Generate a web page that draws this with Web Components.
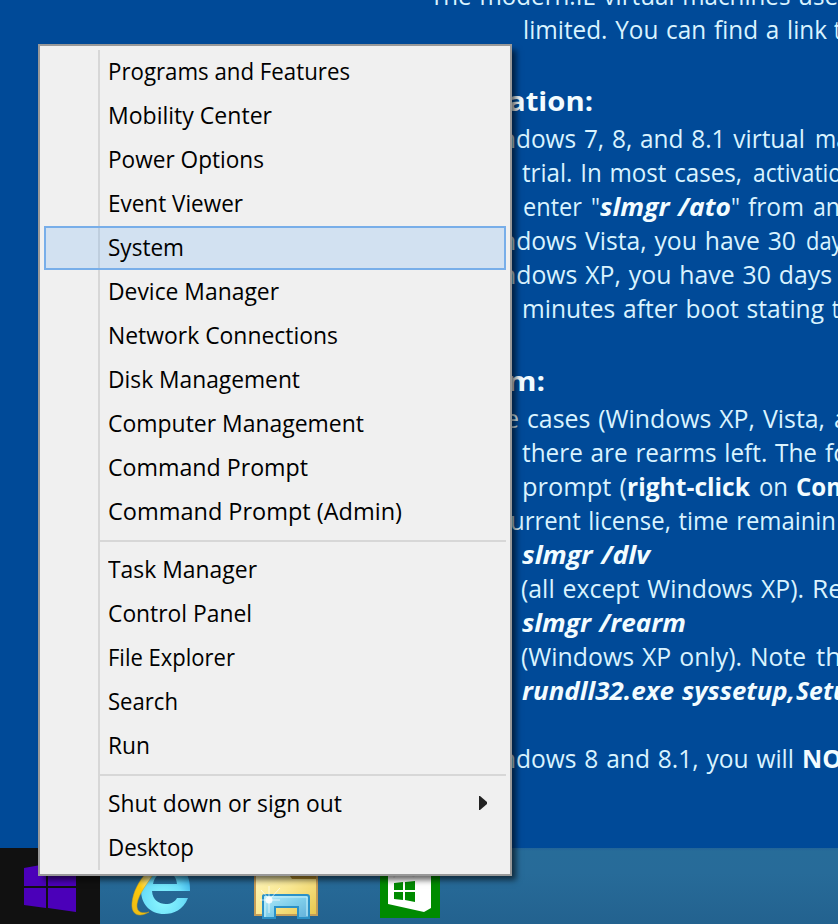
<!DOCTYPE html>
<html lang="en">
<head>
<meta charset="utf-8">
<title>Desktop</title>
<style>
html,body{margin:0;width:838px;height:924px;overflow:hidden}
body{font-family:"Open Sans","Noto Sans",sans-serif}
</style>
</head>
<body>
<desk-top></desk-top>
<script>
// Text run drawn at a given width: the glyphs are condensed or widened to fill it.
class FitText extends HTMLElement{
  connectedCallback(){
    const r=this.attachShadow({mode:"open"});
    r.innerHTML=`<style>:host{display:inline-block;white-space:pre;flex:none}
      span{display:inline-block;transform-origin:0 50%}</style><span><slot></slot></span>`;
    const s=r.querySelector("span"),w=+this.getAttribute("width");
    const n=s.getBoundingClientRect().width;
    s.style.transform=`scaleX(${w/n})`;
    this.style.width=w+"px";
  }
}
customElements.define("fit-text",FitText);

class MenuItem extends HTMLElement{
  connectedCallback(){
    const r=this.attachShadow({mode:"open"});
    r.innerHTML=`<style>
      :host{display:flex;align-items:center;height:44px;box-sizing:border-box;padding:0 18px 2px 64px;font-size:24.3px;line-height:34px;color:#000}
      :host([selected]){background:rgba(120,180,245,.25);border:2px solid #78aee9;padding:0 14px 2px 62px}
      svg{margin-left:auto;width:9px;height:14px}
    </style><fit-text width="${this.getAttribute("width")}">${this.getAttribute("label")}</fit-text>
    ${this.hasAttribute("submenu")?'<svg viewBox="0 0 9 14"><path d="M0 0h1l7 6v2l-7 6H0z" fill="#222"/></svg>':''}`;
  }
}
customElements.define("menu-item",MenuItem);

class MenuSeparator extends HTMLElement{
  connectedCallback(){
    this.attachShadow({mode:"open"}).innerHTML=`<style>
      :host{display:block;height:14px;box-sizing:border-box;padding:6px 0 0 56px}
      i{display:block;height:2px;background:#d7d7d7}</style><i></i>`;
  }
}
customElements.define("menu-separator",MenuSeparator);

class PowerMenu extends HTMLElement{
  connectedCallback(){
    const items=[["Programs and Features",242],["Mobility Center",164],["Power Options",156],["Event Viewer",135],["System",76,"selected"],["Device Manager",171],["Network Connections",230],["Disk Management",192],["Computer Management",256],["Command Prompt",200],["Command Prompt (Admin)",294],0,["Task Manager",149],["Control Panel",144],["File Explorer",127],["Search",70],["Run",42],0,["Shut down or sign out",234],["Desktop",86]];
    items[18][2]="submenu";
    this.attachShadow({mode:"open"}).innerHTML=`<style>
      :host{display:block;box-sizing:border-box;border:2px solid #999;padding:4px;
        background:linear-gradient(#d7d7d7,#d7d7d7) 58px 4px/2px 820px no-repeat #f0f0f0;
        box-shadow:5px 5px 6px -1px rgba(0,0,0,.6)}</style>`+
      items.map(i=>i?`<menu-item label="${i[0]}" width="${i[1]}" ${i[2]||""}></menu-item>`:"<menu-separator></menu-separator>").join("");
  }
}
customElements.define("power-menu",PowerMenu);

// One line of wallpaper text, given as runs of [left, right, text, style].
class NoteLine extends HTMLElement{
  set runs(list){
    const r=this.attachShadow({mode:"open"});
    let x=0,h="";
    for(const [a,b,t,c] of list){h+=`<fit-text class="${c||""}" style="margin-left:${a-x}px" width="${b-a}">${t}</fit-text>`;x=b}
    r.innerHTML=`<style>:host{display:flex;align-items:baseline;height:34px;line-height:34px;font-size:25px;word-spacing:1.5px;color:#d9f3ff}
      .b,.i,.h{font-weight:700;color:#f2fcff}.i{font-style:italic;font-size:24.5px;padding-top:1px}.h{font-size:27px;padding-top:1px}</style>`+h;
  }
}
customElements.define("note-line",NoteLine);

class WallpaperNotes extends HTMLElement{
  connectedCallback(){
    const r=this.attachShadow({mode:"open"});
    r.innerHTML=`<style>:host{display:block;box-sizing:border-box;overflow:hidden;background:#004a98}
      section{margin-top:-22px;width:900px}section+section{margin-top:37px}section+section+section{margin-top:38px}section+section.last{margin-top:34px}
      .head{margin-bottom:4px}</style>`;
    const blocks=[
     [[[430,838,"The modern.IE virtual machines use"]],
      [[523,827,"limited. You can find a link"],[834,852,"to"]]],
     [[[508,593,"ation:","h"]],
      [[501,805,"ndows 7, 8, and 8.1 virtual"],[815,849,"ma"]],
      [[522,742,"trial. In most cases,"],[753,842,"activatio"]],
      [[523,582,"enter"],[591,600,'"'],[600,731,"slmgr /ato","i"],[731,740,'"'],[748,804,"from"],[813,840,"an"]],
      [[501,796,"ndows Vista, you have 30"],[806,853,"days"]],
      [[501,832,"ndows XP, you have 30 days"]],
      [[522,824,"minutes after boot stating"],[832,850,"to"]]],
     [[[507,545,"m:","h"]],
      [[505,825,"e cases (Windows XP, Vista,"],[834,862,"an"]],
      [[522,817,"there are rearms left. The"],[825,848,"fo"]],
      [[522,627,"prompt ("],[627,750,"right-click","b"],[759,788,"on"],[796,850,"Com","b"]],
      [[510,836,"urrent license, time remainin"]],
      [[522,650,"slmgr /dlv","i"]],
      [[521,804,"(all except Windows XP)."],[812,843,"Re"]],
      [[522,686,"slmgr /rearm","i"]],
      [[521,742,"(Windows XP only)."],[750,806,"Note"],[816,841,"th"]],
      [[522,674,"rundll32.exe","i"],[682,795,"syssetup,","i"],[796,848,"Setu","i"]]],
     [[[501,794,"ndows 8 and 8.1, you will"],[802,842,"NO","b"]]]];
    blocks.forEach((b,n)=>{
      const s=document.createElement("section");
      if(n==3)s.className="last";
      r.append(s);
      b.forEach(l=>{const e=document.createElement("note-line");if(l[0][3]=="h")e.className="head";s.append(e);e.runs=l});
    });
  }
}
customElements.define("wallpaper-notes",WallpaperNotes);

const art={
 start:`<svg viewBox="0 848 100 76" width="100" height="76"><g fill="#4b00b9"><path d="M24 868l22-4v22H24zM48 864l28-5v27H48zM24 888h22v20l-22-3zM48 888h28v24l-28-4z"/></g></svg>`,
 ie:`<svg viewBox="100 848 120 76" width="120" height="76"><defs><radialGradient id="d" cx=".45" cy=".75" r=".7"><stop offset="0" stop-color="#8cf7ff"/><stop offset=".6" stop-color="#6bdef9"/><stop offset="1" stop-color="#38aee5"/></radialGradient><linearGradient id="y" x1="0" y1="1" x2="1" y2="0"><stop offset="0" stop-color="#eaba18"/><stop offset=".5" stop-color="#ffca08"/><stop offset=".8" stop-color="#fff2a0"/><stop offset="1" stop-color="#e9b619"/></linearGradient></defs>
 <path fill="url(#d)" fill-rule="evenodd" d="M190 891H152C153 907 173 907 177 898H188C183 910 174 914 164 914 150 914 141 904 141 890 141 874 151 863 165 863 181 863 191 873 190 891zM153 884H177C176 868 156 868 153 884z"/>
 <path fill="url(#y)" stroke="#d2a313" stroke-width=".5" d="M155 872L146 873C139 881 133 892 132 903 131 915 139 918 149 912 143 914 136 913 137 904 139 893 147 884 155 872z"/></svg>`,
 files:`<svg viewBox="220 848 130 76" width="130" height="76"><defs><linearGradient id="f" x1="0" y1="0" x2="1" y2="1"><stop offset="0" stop-color="#fff8c4"/><stop offset=".5" stop-color="#fae994"/><stop offset="1" stop-color="#e8c64b"/></linearGradient><linearGradient id="b" x1="0" y1="0" x2="1" y2="1"><stop offset="0" stop-color="#b9edfa"/><stop offset=".5" stop-color="#80cfeb"/><stop offset="1" stop-color="#62afd9"/></linearGradient></defs>
 <path d="M255 864H317V915H255z" fill="url(#f)" stroke="#c49d58" stroke-width="2"/><path d="M290 876h26v3h-24z" fill="#b28b2a"/>
 <path d="M263 918V896q0-1 2-1H307q2 0 2 2V918H298V907H275V918z" fill="url(#b)" stroke="#2b91c7" stroke-width="2"/><path d="M265 917V897H307V916" fill="none" stroke="#c8f2fb" stroke-width="1"/>
 <path d="M269 886v27M260 900h20M270 899l10-11M269 899l-8-9" stroke="#fff" stroke-width="1" opacity=".7"/><circle cx="269" cy="900" r="3.5" fill="#fff" opacity=".85"/></svg>`,
 store:`<svg viewBox="350 848 120 76" width="120" height="76"><path fill="#008a00" d="M380 858h60v60h-60z"/><path fill="#fff" d="M388 876H431V908L424 912 388 904z"/><path d="M394 878c0-8 16-8 20-1" stroke="#eee" stroke-width="2" fill="none"/><path fill="#008a00" d="M394 883l9-1v8h-9zM405 882l10-1v9h-10zM394 892h9v8l-9-1zM405 892h10v10l-10-2z"/></svg>`
};
class TaskIcon extends HTMLElement{
  connectedCallback(){
    this.attachShadow({mode:"open"}).innerHTML=`<style>:host{display:block;height:76px;flex:none}:host([name=start]){background:#111}svg{display:block}</style>`+art[this.getAttribute("name")];
  }
}
customElements.define("task-icon",TaskIcon);

class TaskBar extends HTMLElement{
  connectedCallback(){
    this.attachShadow({mode:"open"}).innerHTML=`<style>:host{display:flex;height:76px;background:linear-gradient(#226498 0,#276c99 3px,#276b99 25px,#23628f)}</style>
    <task-icon name="start"></task-icon><task-icon name="ie"></task-icon><task-icon name="files"></task-icon><task-icon name="store"></task-icon>`;
  }
}
customElements.define("task-bar",TaskBar);

class DeskTop extends HTMLElement{
  connectedCallback(){
    this.attachShadow({mode:"open"}).innerHTML=`<style>
      :host{display:grid;grid-template-rows:848px 76px;grid-template-columns:838px;width:838px;height:924px;position:relative;overflow:hidden}
      power-menu{position:absolute;left:38px;top:44px;width:474px;height:832px}</style>
    <wallpaper-notes></wallpaper-notes><task-bar></task-bar><power-menu></power-menu>`;
  }
}
customElements.define("desk-top",DeskTop);
</script>
</body>
</html>
